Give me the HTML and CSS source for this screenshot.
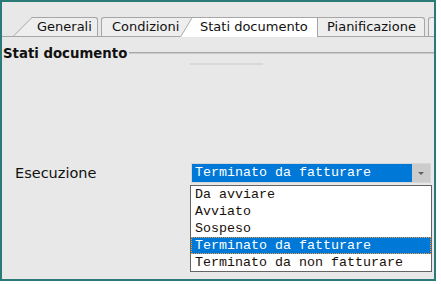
FILE: index.html
```html
<!DOCTYPE html>
<html lang="it">
<head>
<meta charset="UTF-8">
<title>Stati documento</title>
<link rel="stylesheet" href="styles.css">
</head>
<body>
<div class="window">
    <div class="tabs">
        <div class="tab tab-first">Generali</div>
        <div class="tab tab-cond">Condizioni</div>
        <div class="tab tab-active">Stati documento</div>
        <div class="tab tab-pian">Pianificazione</div>
        <div class="tab tab-next"></div>
    </div>

    <div class="group-title">
        <span>Stati documento</span>
        <div class="group-line"></div>
    </div>
    <div class="ghost-line"></div>

    <div class="row">
        <label class="row-label">Esecuzione</label>
        <div class="combo">
            <div class="combo-value">Terminato da fatturare</div>
            <div class="combo-button"><span class="arrow"></span></div>

            <!-- lista aperta sotto la combo -->
            <div class="combo-list">
                <div class="item">Da avviare</div>
                <div class="item">Avviato</div>
                <div class="item">Sospeso</div>
                <div class="item selected">Terminato da fatturare</div>
                <div class="item">Terminato da non fatturare</div>
            </div>
        </div>
    </div>
</div>
</body>
</html>
```

FILE: styles.css
```css
body {
    margin: 0;
    background: #ffffff;
    font-family: "DejaVu Sans", Verdana, sans-serif;
}

.window {
    box-sizing: border-box;
    width: 436px;
    height: 281px;
    border: 2px solid #2a7b78;
    background: #e8e8e8;
    overflow: hidden;
}

/* barra delle schede */
.tabs {
    position: relative;
    z-index: 0;
    display: flex;
    padding: 15px 0 0 30px;
    border-bottom: 1px solid #a6a6a6;
    white-space: nowrap;
}

.tab {
    position: relative;
    box-sizing: border-box;
    height: 19px;
    line-height: 18px;
    font-size: 13px;
    color: #111;
    background: #eeeeee;
    border-top: 1px solid #a6a6a6;
    flex: none;
}

.tab-first {
    z-index: 1;
    width: 66px;
    padding-left: 5px;
    border-right: 1px solid #a6a6a6;
    border-top-right-radius: 3px;
}

.tab-first::before {
    content: "";
    position: absolute;
    z-index: -1;
    top: -1px;
    bottom: 0;
    left: -19px;
    width: 21px;
    background: #eeeeee;
    border-left: 1px solid #a6a6a6;
    border-top: 1px solid #a6a6a6;
    transform-origin: bottom left;
    transform: skewX(-45deg);
}

.tab-cond {
    z-index: 1;
    width: 95px;
    margin-left: 3px;
    padding-left: 10px;
    border-left: 1px solid #a6a6a6;
    border-top-left-radius: 3px;
}

.tab-active {
    z-index: 3;
    width: 126px;
    height: 20px;
    margin-left: -4px;
    margin-bottom: -1px;
    padding-left: 8px;
    background: #ffffff;
    border-right: 1px solid #a6a6a6;
}

.tab-active::before {
    content: "";
    position: absolute;
    z-index: -1;
    top: -1px;
    bottom: 0;
    left: -12px;
    width: 14px;
    background: #ffffff;
    border-left: 1px solid #a6a6a6;
    border-top: 1px solid #a6a6a6;
    transform-origin: bottom left;
    transform: skewX(-31deg);
}

.tab-pian {
    z-index: 2;
    width: 107px;
    padding-left: 9px;
    border-right: 1px solid #a6a6a6;
    border-top-right-radius: 3px;
}

.tab-next {
    z-index: 1;
    width: 40px;
    margin-left: 3px;
    border-left: 1px solid #a6a6a6;
    border-top-left-radius: 3px;
}

/* titolo del gruppo */
.group-title {
    display: flex;
    align-items: center;
    margin-top: 9px;
    padding-left: 1px;
    height: 14px;
    font-size: 13.3px;
    font-weight: bold;
    color: #111;
}

.group-line {
    flex: 1;
    margin-left: 2px;
    border-top: 1px solid #a8a8a8;
    border-bottom: 1px solid #cacaca;
}

.ghost-line {
    width: 73px;
    height: 2px;
    margin: 3px 0 0 188px;
    background: #d8d8d8;
}

/* riga Esecuzione */
.row {
    display: flex;
    align-items: center;
    margin-top: 98px;
}

.row-label {
    box-sizing: border-box;
    width: 189px;
    padding-left: 13px;
    font-size: 14.5px;
    color: #111;
}

.combo {
    position: relative;
    box-sizing: border-box;
    display: flex;
    width: 240px;
    height: 20px;
    border: 1px solid #d6d6d6;
    font-family: "Liberation Mono", "Courier New", monospace;
    font-size: 13.33px;
}

.combo-value {
    flex: 1;
    padding-left: 3px;
    line-height: 18px;
    color: #ffffff;
    background: #0078d7;
}

.combo-button {
    width: 18px;
    display: flex;
    align-items: center;
    justify-content: center;
    background: #cccccc;
}

.arrow {
    width: 0;
    height: 0;
    border-left: 3px solid transparent;
    border-right: 3px solid transparent;
    border-top: 3px solid #606060;
}

.combo-list {
    position: absolute;
    top: 21px;
    left: -2px;
    width: 242px;
    box-sizing: border-box;
    border: 1px solid #646464;
    background: #ffffff;
}

.item {
    height: 17px;
    line-height: 17px;
    padding-left: 4px;
    color: #1a1008;
    white-space: nowrap;
}

.item.selected {
    color: #ffffff;
    background: #0078d7;
    outline: 1px dotted #f0a040;
    outline-offset: -1px;
}
```
